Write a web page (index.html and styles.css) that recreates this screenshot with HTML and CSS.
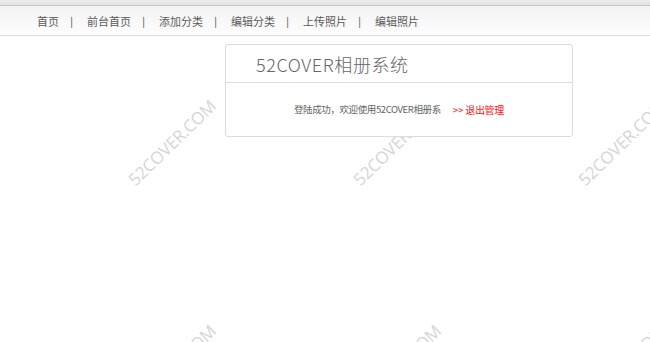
FILE: index.html
```html
<!DOCTYPE html>
<html lang="zh-CN">
<head>
<meta charset="utf-8">
<title>52COVER相册系统</title>
<link rel="stylesheet" href="styles.css">
</head>
<body>
<div class="wm-layer" aria-hidden="true">
  <div class="watermarks">
    <span class="wm-cell"><span class="wm">52COVER.COM</span></span>
    <span class="wm-cell"><span class="wm">52COVER.COM</span></span>
    <span class="wm-cell"><span class="wm">52COVER.COM</span></span>
    <span class="wm-cell"><span class="wm">52COVER.COM</span></span>
    <span class="wm-cell"><span class="wm">52COVER.COM</span></span>
    <span class="wm-cell"><span class="wm">52COVER.COM</span></span>
  </div>
</div>
<header class="header">
  <div class="topstrip"></div>
  <nav class="nav">
    <a class="nav-item" href="#">首页</a><span class="sep">|</span>
    <a class="nav-item" href="#">前台首页</a><span class="sep">|</span>
    <a class="nav-item" href="#">添加分类</a><span class="sep">|</span>
    <a class="nav-item" href="#">编辑分类</a><span class="sep">|</span>
    <a class="nav-item" href="#">上传照片</a><span class="sep">|</span>
    <a class="nav-item" href="#">编辑照片</a>
  </nav>
</header>
<main class="main">
  <section class="panel">
    <div class="panel-title">52COVER相册系统</div>
    <div class="panel-body">
      <span class="msg">登陆成功，欢迎使用52COVER相册系</span>
      <a class="logout" href="#">&gt;&gt; 退出管理</a>
    </div>
  </section>
</main>
</body>
</html>
```
FILE: styles.css
```css
html, body {
  margin: 0;
  padding: 0;
  width: 650px;
  height: 342px;
  overflow: hidden;
  background: #fff;
}
body {
  position: relative;
  font-family: "Noto Sans CJK SC", "Noto Sans", sans-serif;
  color: #555;
}
.wm-layer {
  position: absolute;
  inset: 0;
  overflow: hidden;
  z-index: 0;
  pointer-events: none;
}
.watermarks {
  margin: 30px 0 0 59px;
  display: grid;
  grid-template-columns: repeat(3, 225px);
  grid-template-rows: repeat(2, 225px);
}
.wm-cell {
  display: flex;
  align-items: center;
  justify-content: center;
}
.wm {
  font-family: "Open Sans", "Noto Sans", sans-serif;
  font-size: 17px;
  letter-spacing: -0.3px;
  color: #d6d6d6;
  transform: rotate(-44deg);
  white-space: nowrap;
}
.header {
  position: relative;
  z-index: 1;
}
.topstrip {
  height: 5px;
  background: linear-gradient(#eeeeee, #e2e2e2);
  border-bottom: 1px solid #c4c4c4;
}
.nav {
  height: 29px;
  display: flex;
  align-items: center;
  padding-left: 37px;
  background: linear-gradient(#f3f3f3, #fdfdfd);
  border-bottom: 1px solid #dedede;
  font-size: 11px;
}
.nav-item {
  color: #5a5a5a;
  text-decoration: none;
}
.sep {
  width: 28px;
  text-align: center;
  color: #444;
  font-size: 10px;
  padding-right: 3px;
  box-sizing: border-box;
}
.main {
  position: relative;
  z-index: 1;
  padding: 8px 0 0 225px;
}
.panel {
  width: 348px;
  height: 93px;
  box-sizing: border-box;
  border: 1px solid #dcdcdc;
  border-radius: 3px;
  background: #fff;
}
.panel-title {
  height: 38px;
  box-sizing: border-box;
  border-bottom: 1px solid #dcdcdc;
  padding-left: 30px;
  font-size: 18px;
  line-height: 38px;
  letter-spacing: 0.6px;
  color: #666;
  font-weight: 300;
}
.panel-body {
  display: flex;
  align-items: center;
  height: 52px;
  padding-left: 68px;
  font-size: 9.5px;
}
.msg {
  color: #666;
  letter-spacing: -0.4px;
}
.logout {
  margin-left: 12px;
  color: #ff1010;
  font-size: 10px;
  letter-spacing: -0.3px;
  text-decoration: none;
}
```
